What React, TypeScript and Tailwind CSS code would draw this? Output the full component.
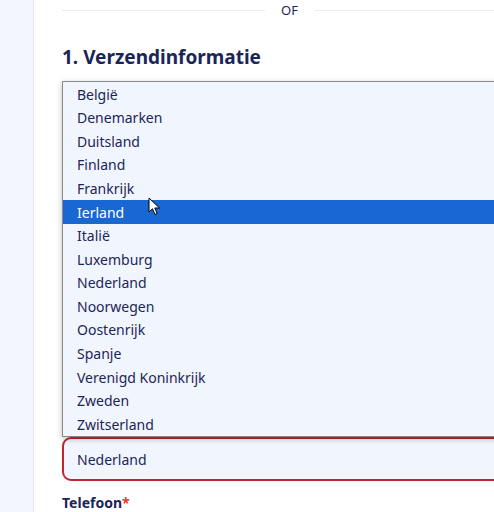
import { useState } from "react";

const countries = [
    "België",
    "Denemarken",
    "Duitsland",
    "Finland",
    "Frankrijk",
    "Ierland",
    "Italië",
    "Luxemburg",
    "Nederland",
    "Noorwegen",
    "Oostenrijk",
    "Spanje",
    "Verenigd Koninkrijk",
    "Zweden",
    "Zwitserland",
];

const App = () => {
    const [hovered, setHovered] = useState("Ierland");
    const [selected, setSelected] = useState("Nederland");

    return (
        <div className="flex w-[494px] h-[512px] overflow-hidden bg-white font-['Noto_Sans',sans-serif] text-[#1c2657]">
            <div className="w-[34px] shrink-0 bg-[#f3f6fe] border-r border-[#e1e5ee]" />
            <div className="flex flex-col w-[560px] shrink-0 pl-[28px] [&>*]:shrink-0">
                <div className="flex items-center h-[21px] gap-4">
                    <div className="w-[203px] h-px bg-[#ececec]" />
                    <span className="text-[13px] leading-none">OF</span>
                    <div className="flex-1 h-px bg-[#ececec]" />
                </div>
                <h2 className="mt-[23px] text-[19px] leading-[26px] font-bold text-[#1a2558]">1. Verzendinformatie</h2>
                <div className="relative h-[356px] mt-[11px]">
                    <ul className="absolute inset-0 border border-[#8a8a8a] bg-[#f1f5fe] shadow-[0_2px_6px_rgba(0,0,0,0.25)] pt-[0.5px]">
                        {countries.map((country) => (
                            <li
                                key={country}
                                onMouseEnter={() => setHovered(country)}
                                onClick={() => setSelected(country)}
                                className={`flex items-center h-[23.57px] pl-[14px] text-[14px] cursor-default
                                ${hovered === country ? "bg-[#1967d2] text-white" : "text-[#1c2657]"}`}
                            >
                                {country}
                            </li>
                        ))}
                    </ul>
                    <svg className="absolute left-[86px] top-[116px]" width="13" height="19" viewBox="0 0 13 19">
                        <path d="M1 1 L1 15 L4.5 11.8 L7 17.5 L9.2 16.5 L6.8 11 L11.5 11 Z" fill="white" stroke="black" strokeWidth="1" strokeLinejoin="round" />
                    </svg>
                </div>
                <div className="flex items-center h-[44px] border-2 border-[#c0272d] rounded-[9px] bg-[#f1f5fe] pl-[13px] text-[14px] text-[#1c2657]">
                    {selected}
                </div>
                <label className="mt-[12px] text-[14px] leading-[20px] font-bold text-[#1a2558]">
                    Telefoon<span className="text-[#e53935]">*</span>
                </label>
            </div>
        </div>
    );
};

export default App;
